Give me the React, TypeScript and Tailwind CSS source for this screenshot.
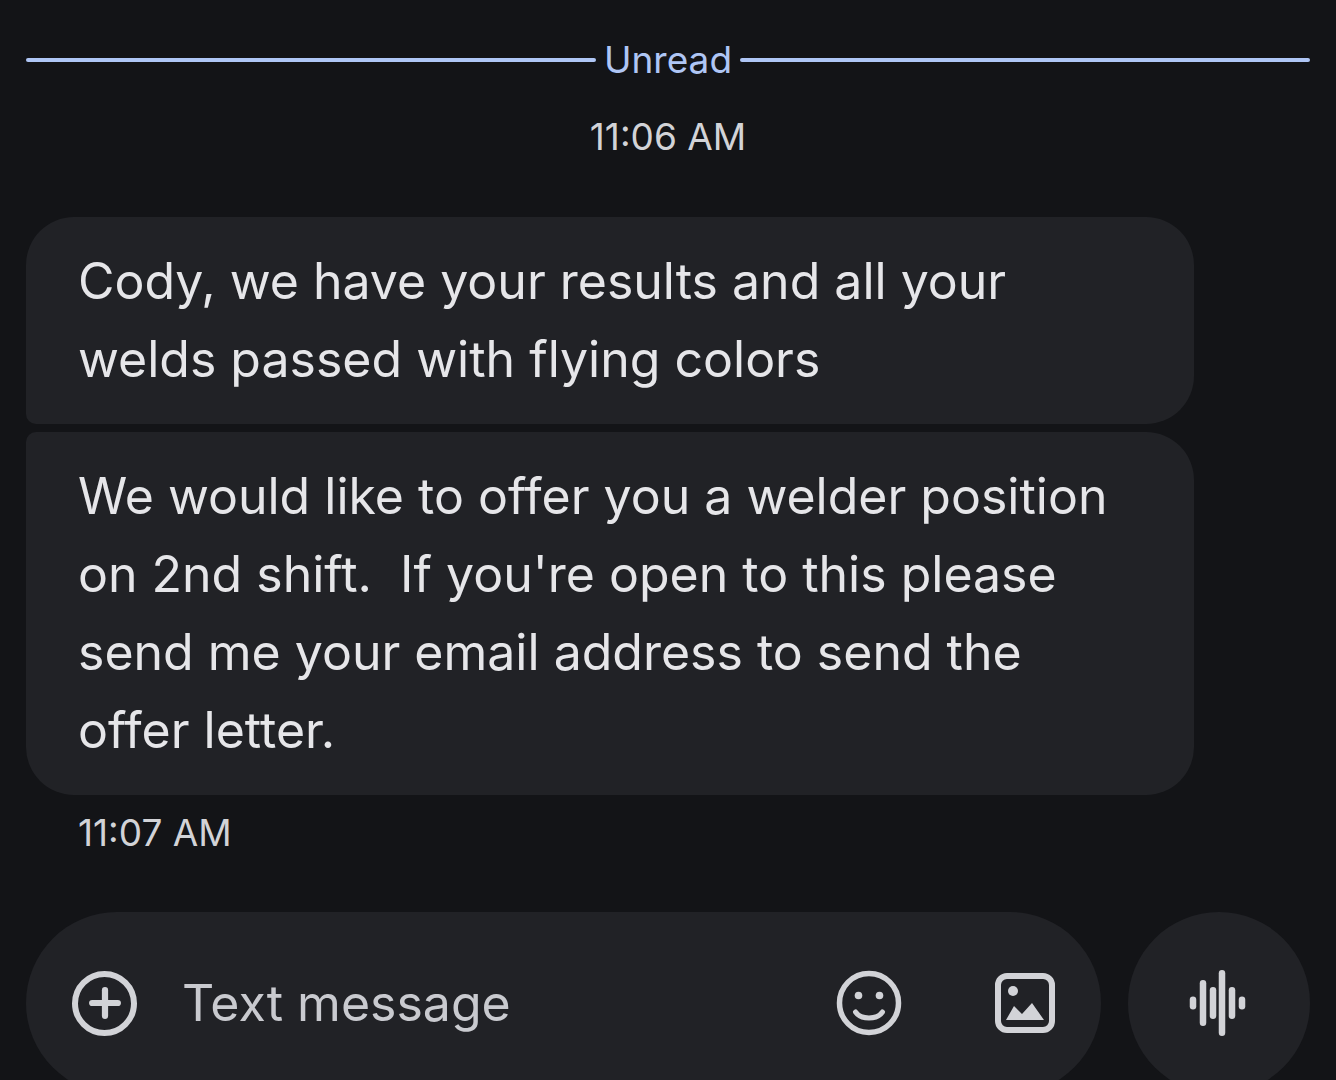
import { Plus } from 'lucide-react';

function SmileIcon() {
  return (
    <svg width="66" height="66" viewBox="0 0 66 66" fill="none" stroke="#d2d3d7" strokeWidth="5.5">
      <circle cx="33" cy="33" r="29.5" />
      <circle cx="22.5" cy="25.5" r="3.8" fill="#d2d3d7" stroke="none" />
      <circle cx="43.5" cy="25.5" r="3.8" fill="#d2d3d7" stroke="none" />
      <path d="M19.5 42 C 25 50, 41 50, 46.5 42" strokeLinecap="round" strokeWidth="5" />
    </svg>
  );
}

function ImageIcon() {
  return (
    <svg width="60" height="60" viewBox="0 0 60 60" fill="none">
      <rect x="3" y="3" width="54" height="54" rx="9" stroke="#d2d3d7" strokeWidth="6" />
      <circle cx="18" cy="18" r="5" fill="#d2d3d7" />
      <path d="M11 47 L19 33 L27 41 L37 30 L49 47 Z" fill="#d2d3d7" />
    </svg>
  );
}

function WaveIcon() {
  const bars = [
    { x: 4, h: 13 },
    { x: 14, h: 46 },
    { x: 24, h: 32 },
    { x: 33, h: 66 },
    { x: 43, h: 32 },
    { x: 53, h: 13 },
  ];
  return (
    <svg width="58" height="66" viewBox="0 0 58 66" fill="#d2d3d7">
      {bars.map((b) => (
        <rect key={b.x} x={b.x - 3.25} y={33 - b.h / 2} width="6.5" height={b.h} rx="3.25" />
      ))}
    </svg>
  );
}

export default function App() {
  return (
    <div className="flex h-[1080px] flex-col overflow-hidden bg-[#131417] pl-[26px] pr-[26px] font-['Inter',sans-serif] text-[#e6e6e9]">
      {/* Unread */}
      <div className="flex h-[40px] mt-[40px] items-center gap-2">
        <div className="h-[4px] flex-1 rounded-full bg-[#afc6f5]" />
        <span className="text-[37px] leading-[40px] text-[#afc6f5]">Unread</span>
        <div className="h-[4px] flex-1 rounded-full bg-[#afc6f5]" />
      </div>
      <div className="mt-[37px] text-center text-[37px] leading-[40px] text-[#d2d3d7]">11:06 AM</div>

      {/* Messages */}
      <div className="mt-[60px] flex w-[1168px] flex-col gap-[8px] text-[50px] leading-[78px]">
        <div className="h-[207px] rounded-t-[48px] rounded-br-[48px] rounded-bl-[10px] bg-[#212226] pl-[52px] pt-[25px]">
          Cody, we have your results and all your
          <br />
          welds passed with flying colors
        </div>
        <div className="h-[363px] rounded-b-[48px] rounded-tr-[48px] rounded-tl-[10px] bg-[#212226] pl-[52px] pt-[25px] whitespace-pre">
          We would like to offer you a welder position
          <br />
          {"on 2nd shift.  If you're open to this please"}
          <br />
          send me your email address to send the
          <br />
          offer letter.
        </div>
      </div>
      <div className="mt-[18px] pl-[52px] text-[37px] leading-[40px] text-[#d2d3d7]">11:07 AM</div>

      {/* Composer */}
      <div className="mt-[59px] flex gap-[27px]">
        <div className="flex h-[182px] flex-1 items-center rounded-[91px] bg-[#212226] pl-[46px]">
          <div className="flex h-[65px] w-[65px] items-center justify-center rounded-full border-[6px] border-[#d2d3d7]">
            <Plus size={44} color="#d2d3d7" strokeWidth={3.4} />
          </div>
          <span className="ml-[45px] text-[50px] text-[#c9cacf]">Text message</span>
          <div className="ml-auto flex items-center gap-[93px] pr-[46px]">
            <SmileIcon />
            <ImageIcon />
          </div>
        </div>
        <div className="flex h-[182px] w-[182px] items-center justify-center rounded-full bg-[#212226] pr-[3px]">
          <WaveIcon />
        </div>
      </div>
    </div>
  );
}
